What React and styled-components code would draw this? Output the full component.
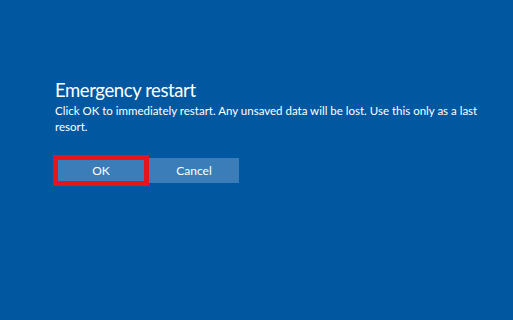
import React from "react";
import styled, { createGlobalStyle } from "styled-components";

const GlobalStyle = createGlobalStyle`
  html, body {
    margin: 0;
    padding: 0;
    background: #0158a0;
  }
`;

const Screen = styled.div`
  width: 513px;
  height: 320px;
  background: #0158a0;
  color: #fff;
  font-family: Lato, "Open Sans", sans-serif;
  padding: 77px 0 0 55px;
  box-sizing: border-box;
`;

const Title = styled.h1`
  margin: 0;
  font-size: 18.5px;
  font-weight: 400;
  line-height: 26px;
  letter-spacing: -0.4px;
`;

const Message = styled.p`
  margin: 0;
  width: 430px;
  font-size: 11.5px;
  line-height: 16px;
`;

const ButtonRow = styled.div`
  display: flex;
  gap: 3px;
  margin-top: 23px;
  margin-left: 1px;
`;

const Button = styled.button`
  width: 90px;
  height: 25px;
  border: none;
  padding: 0;
  background: #3a7db8;
  color: #fff;
  font-family: inherit;
  font-size: 12px;
  outline: ${(p) => (p.focused ? "5px solid #e8141c" : "none")};
  outline-offset: -2px;
`;

export default function App() {
  return (
    <Screen>
      <GlobalStyle />
      <Title>Emergency restart</Title>
      <Message>
        Click OK to immediately restart. Any unsaved data will be lost. Use this
        only as a last resort.
      </Message>
      <ButtonRow>
        <Button focused>OK</Button>
        <Button>Cancel</Button>
      </ButtonRow>
    </Screen>
  );
}
